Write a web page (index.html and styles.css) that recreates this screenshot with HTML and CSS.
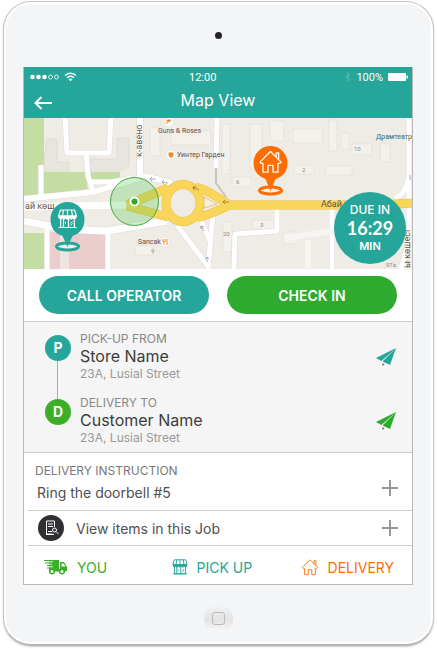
FILE: index.html
```
<!DOCTYPE html>
<html lang="en">
<head>
  <meta charset="UTF-8">
  <meta name="viewport" content="width=device-width, initial-scale=1.0">
  <title>Map View</title>
  <link rel="stylesheet" href="styles.css">
</head>
<body>
  <!-- shared icons -->
  <svg class="sprite" width="0" height="0" aria-hidden="true">
    <symbol id="store" viewBox="0 0 20 20">
      <path d="M3 1h14l2 6H1z M3.2 10v8.5h13.6V10 M6 10v8.500 M11 10v8.500 M1 18.500h18" fill="none" stroke="currentColor" stroke-width="1.200"/>
      <path d="M6 1 5 7M10 1v6M14 1l1 6" stroke="currentColor" stroke-width="1.200"/>
      <path d="M1 6.500h18v2a2 2 0 0 1-3.600 1 2 2 0 0 1-3.600 0 2 2 0 0 1-3.600 0 2 2 0 0 1-3.600 0A2 2 0 0 1 1 8.500z" fill="currentColor"/>
      <path d="M8 13v2M13 14.500l2-2M13 16.500l2-2" stroke="currentColor" stroke-width="1"/>
    </symbol>
    <symbol id="house" viewBox="0 0 20 20">
      <path d="M1.500 10.500 10 2l8.500 8.500-1 1H16V18.500h-4V13H8v5.500H4v-7H2.500z M14.500 6.200V3h2v5" fill="none" stroke="currentColor" stroke-linejoin="round"/>
    </symbol>
    <symbol id="plane" viewBox="0 0 20 18">
      <path d="M20 0 0 10l5.500 3zM20 0 6.500 13.500 14 17z" fill="currentColor"/>
      <path d="M6.500 15v3l2-1.500z" fill="#666"/>
    </symbol>
  </svg>

  <div class="device">
    <div class="camera"></div>

    <main class="screen">
      <header class="header">
        <div class="status">
          <div class="signal">
            <svg width="46" height="10" viewBox="0 0 46 10">
              <g fill="#fff"><circle cx="2.500" cy="5" r="2.300"/><circle cx="8.500" cy="5" r="2.300"/><circle cx="14.500" cy="5" r="2.300"/></g>
              <g fill="none" stroke="#fff" stroke-width=".8"><circle cx="20.500" cy="5" r="2"/><circle cx="26.500" cy="5" r="2"/></g>
              <path d="M35 3.500q5.500-4.500 11 0M37 5.800q3.500-3 7 0" fill="none" stroke="#fff" stroke-width="1.400"/>
              <path d="M38.500 7.300q2-1.500 4 0l-2 2z" fill="#fff"/>
            </svg>
          </div>
          <div class="clock">12:00</div>
          <div class="battery">
            <svg width="6" height="10" viewBox="0 0 6 10"><path d="M0 2.500l5 5L3 9.500v-9l2 2-5 5" fill="none" stroke="#62bfb5" stroke-width=".8"/></svg>
            <span>100%</span>
            <svg width="20" height="8" viewBox="0 0 20 8" fill="#fff"><rect width="18" height="8" rx="1"/><rect x="18.500" y="2.500" width="1.500" height="3" rx=".5"/></svg>
          </div>
        </div>
        <div class="title-bar">
          <button class="back" type="button" aria-label="Back">
            <svg width="18" height="14" viewBox="0 0 18 14"><path d="M18 7H1.500M7.500 1l-6 6 6 6" fill="none" stroke="#fff" stroke-width="2"/></svg>
          </button>
          <h1>Map View</h1>
        </div>
      </header>

      <section class="map">
        <svg class="map-canvas" viewBox="24 118 388 151">
          <rect x="24" y="118" width="388" height="151" fill="#efece6"/>

          <!-- parks -->
          <g fill="#c3dda2">
            <path d="M24 118h20v54h-4v22l-16 3z"/>
            <path d="M44 172h41l3 18-44 5zM90 172h30v9l-29-2z"/>
            <path d="M24 233h20v36H24z"/>
          </g>
          <path d="M49 232h56v37H49z" fill="#ebcdcd"/>
          <path d="M60 232h9v37h-9z" fill="#efe5e0"/>

          <!-- buildings -->
          <g fill="#e8e5df" stroke="#d8d5cf" stroke-width=".6">
            <path d="M47 139h10v23h12v9H44v-12z"/>
            <path d="M91 159h26v-21h12v28l-10 6H91z"/>
          </g>
          <g fill="#f3f1ec" stroke="#e2dfd8" stroke-width=".7">
            <path d="M150 128h10v28h-10zM171 131h40v14h-40zM222 124h8v50h-8zM250 124h12v44h-12zM270 121h14v20h-14zM293 129h29v14h-29zM329 120h8v31h-8zM341 133h8v17h-3l-5-2zM352 144h20v11h-20zM380 144h10v18h-10zM294 165h20v9h-20zM326 166h26v9h-26zM232 177h19v10h-19zM252 220h22v9h-22zM223 222h9v30h-9zM284 232h14v12h-14zM135 246l18-1v10h-18z"/>
          </g>

          <!-- streets, a wider grey casing under the white -->
          <g fill="none" stroke-linejoin="round">
            <g stroke="#dddad4">
              <path stroke-width="6" d="M65 116l2 37h42l2-37M86 153l2 23 5 15M90 182h22l20-4M41 165v30"/>
              <path stroke-width="7" d="M24 199l70-7 46-14M140 116v60q10 1 32 7"/>
              <path stroke-width="8" d="M24 221l40 8 43 2 60-10"/>
              <path stroke-width="6" d="M47 228v41M108 230v39M217 116l-1 52M213 214l-5 55M177 225l30 40M199 216l11 25M277 208v23l-42 3-1 35M332 205v64M409 116v58q-2 20-14 24M409 180v60l-8 29"/>
            </g>
            <path d="M216 168v15l10 14" stroke="#c9c5bd" stroke-width="2"/>
            <g stroke="#fff">
              <path stroke-width="5" d="M65 116l2 37h42l2-37M86 153l2 23 5 15M90 182h22l20-4M41 165v30"/>
              <path stroke-width="6" d="M24 199l70-7 46-14M140 116v60q10 1 32 7"/>
              <path stroke-width="7" d="M24 221l40 8 43 2 60-10M24 207l102-2"/>
              <path stroke-width="5" d="M47 228v41M108 230v39M217 116l-1 52M213 214l-5 55M177 225l30 40M199 216l11 25M277 208v23l-42 3-1 35M332 205v64M409 116v58q-2 20-14 24M409 180v60l-8 29"/>
            </g>
            <path d="M284 238l50-7M308 240v28" stroke="#f7f5f1" stroke-width="6"/>
          </g>

          <!-- avenue and roundabout -->
          <g fill="none" stroke-linejoin="round">
            <g stroke="#e8c04d">
              <path stroke-width="9" d="M127 205l41-17M127 206l41 11M196 187q8 2 16 7t18 11h150l32-2M197 218q12-3 33-13"/>
              <ellipse cx="183" cy="203" rx="17" ry="18.500" stroke-width="9"/>
            </g>
            <g stroke="#f9d55a">
              <path stroke-width="8" d="M127 205l41-17M127 206l41 11M196 187q8 2 16 7t18 11h150l32-2M197 218q12-3 33-13"/>
              <ellipse cx="183" cy="203" rx="17" ry="18.500" stroke-width="8"/>
            </g>
          </g>
          <path d="M204 197v11l13-4z" fill="#f5efe1" stroke="#e0bb57" stroke-width=".8"/>
          <g fill="none" stroke="#8d93be" stroke-width=".8">
            <path d="M150 179h6m-4-2-2 2 2 2M162 182l6 1m-4-3-2 2 2 2M204 231l-3-5m0 3v-3l3 1M207 262v-5m-2 2 2-2 2 2M410 180v-5"/>
          </g>
          <path d="M199 190l-6-3m1 3-1-3h3M229 202h-6m2-2-2 2 2 2" fill="none" stroke="#8a742f" stroke-width=".8"/>

          <g class="map-label">
            <text x="158" y="133">Guns &amp; Roses</text>
            <text x="177" y="157">Уинтер Гарден</text>
            <text x="138" y="244">Sancak</text>
            <text class="theatre" x="376" y="139">Драмтеатр</text>
          </g>
          <g class="map-street">
            <text x="321" y="207">Абай</text>
            <text x="25" y="209">ай көш</text>
            <text transform="translate(142 157) rotate(-90)">к-авено</text>
            <text transform="translate(410 268) rotate(-90)">ы көшесі</text>
          </g>
          <g class="map-number">
            <text x="236" y="184">6</text><text x="260" y="227">3</text><text x="223" y="236">20</text>
            <text x="354" y="151">10</text><text x="302" y="172">2</text><text x="151" y="253">9</text><text x="386" y="267">97а</text>
          </g>
          <g>
            <circle cx="169" cy="122" r="4" fill="#fff"/><path d="M167 120h4l-2 2zv4" fill="#f08a32" stroke="#f08a32"/>
            <circle cx="171" cy="155" r="4" fill="#fff"/><path d="M168.500 152.500h5v2.500l-1 2.500h-3l-1-2.500z" fill="#f08a32"/>
            <circle cx="165" cy="242" r="4" fill="#fff"/><path d="M163 239v3M165 239v3M164 241v4M167 239v6" stroke="#f08a32"/>
          </g>

          <!-- current position -->
          <circle cx="134.500" cy="201.500" r="24" fill="#4fc94f" fill-opacity=".28" stroke="#42a73c"/>
          <circle cx="134.500" cy="201.500" r="4" fill="#2eab2e" stroke="#fff" stroke-width="1.800"/>

          <!-- pins -->
          <g>
            <ellipse cx="67.500" cy="246.500" rx="11" ry="3.500" fill="#f4eeea" stroke="#26a69a" stroke-width="3"/>
            <path d="M67.500 247l-5-11q-12-4-12-17a17 17 0 0 1 34 0q0 13-12 17z" fill="#26a69a"/>
            <use href="#store" x="57" y="209" width="21" height="20" color="#fff"/>
          </g>
          <g>
            <ellipse cx="270.500" cy="190.500" rx="11" ry="3.500" fill="#f4eeea" stroke="#ff6d00" stroke-width="3"/>
            <path d="M270.500 191l-5-12q-12-4-12-16a17 17 0 0 1 34 0q0 12-12 16z" fill="#ff6d00"/>
            <use href="#house" x="258" y="149" width="25" height="25" color="#fff"/>
          </g>
        </svg>
        <div class="due">
          <span>DUE IN</span>
          <strong>16:29</strong>
          <span class="unit">MIN</span>
        </div>
      </section>

      <div class="actions">
        <button class="btn" type="button">CALL OPERATOR</button>
        <button class="btn btn-green" type="button">CHECK IN</button>
      </div>

      <section class="stops">
        <div class="stop">
          <span class="badge">P</span>
          <div class="stop-text">
            <h2>PICK-UP FROM</h2>
            <p class="name">Store Name</p>
            <p class="address">23A, Lusial Street</p>
          </div>
          <button class="navigate" type="button" aria-label="Navigate to store"><svg width="20" height="18"><use href="#plane"/></svg></button>
        </div>
        <div class="stop">
          <span class="badge badge-green">D</span>
          <div class="stop-text">
            <h2>DELIVERY TO</h2>
            <p class="name">Customer Name</p>
            <p class="address">23A, Lusial Street</p>
          </div>
          <button class="navigate navigate-green" type="button" aria-label="Navigate to customer"><svg width="20" height="18"><use href="#plane"/></svg></button>
        </div>
      </section>

      <section class="instruction">
        <div class="instruction-text">
          <h2>DELIVERY INSTRUCTION</h2>
          <p>Ring the doorbell #5</p>
        </div>
        <button class="plus" type="button" aria-label="Show instruction"></button>
      </section>

      <section class="items">
        <span class="items-icon">
          <svg width="26" height="26" viewBox="0 0 26 26" fill="none" stroke="#fff">
            <path d="M16.500 12V6h-8v13h6M10 9h5M10 11.500h5M10 16.500h4M8 19.500h8"/>
            <circle cx="16.500" cy="15" r="2"/><path d="M18 16.500l2.500 2.500"/>
          </svg>
        </span>
        <p>View items in this Job</p>
        <button class="plus" type="button" aria-label="Show items"></button>
      </section>

      <nav class="tabs">
        <a class="tab tab-you" href="#you">
          <svg width="24" height="16" viewBox="0 0 24 16">
            <path d="M5 1h10v11H5z M16 3h4l3 5v4h-7z M5 10h17v2.500H5z" fill="currentColor"/>
            <path d="M0 1.500h6M1 4h6M3 6.500h5M3 9h4" stroke="currentColor"/>
            <path d="M5 2.800h4M5 5.200h3M5 7.800h4" stroke="#fff" stroke-width=".8"/>
            <path d="M17.500 4.500h2l2 3h-4z" fill="#fff"/>
            <g fill="#fff" stroke="currentColor" stroke-width="1.500"><circle cx="8" cy="12.500" r="2.300"/><circle cx="18" cy="12.500" r="2.300"/></g>
          </svg>
          YOU
        </a>
        <a class="tab tab-pickup" href="#pickup">
          <svg width="16" height="16"><use href="#store"/></svg>
          PICK UP
        </a>
        <a class="tab tab-delivery" href="#delivery">
          <svg width="18" height="18"><use href="#house"/></svg>
          DELIVERY
        </a>
      </nav>
    </main>

    <button class="home" type="button" aria-label="Home"></button>
  </div>
</body>
</html>
```
FILE: styles.css
```
* {
  box-sizing: border-box;
}
body {
  margin: 0;
  padding: 1px 3px 4px;
  background-color: #fff;
  font-family: Inter, "Liberation Sans", sans-serif;
  color: #505050;
}
.sprite {
  position: absolute;
}
h1, h2, p {
  margin: 0;
  font-weight: 400;
}
svg {
  display: block;
  flex: none;
}
button {
  padding: 0;
  border: none;
  background: none;
  font-family: inherit;
  cursor: pointer;
}

/* tablet frame */
.device {
  display: flex;
  flex-direction: column;
  padding: 0 20px;
  border: 1px solid #c4c6c8;
  border-bottom: 2px solid #b4b6b8;
  border-radius: 28px;
  background-color: #f4f5f7;
  box-shadow: inset 0 0 0 2px #fff, 0 1px 2px #ccc;
}
.camera {
  align-self: center;
  width: 7px;
  height: 7px;
  margin: 30px 0 28px;
  border-radius: 50%;
  background-color: #252527;
}
.screen {
  border: 1px solid #bcb8b8;
  border-top: none;
  margin-left: -1px;
  background-color: #fff;
}
.home {
  align-self: center;
  display: flex;
  width: 29px;
  height: 29px;
  margin: 19px 0 11px;
  border-radius: 50%;
  background: linear-gradient(#f4f5f7, #e2e3e5 55%, #fafafa);
}
.home::before {
  content: "";
  width: 11px;
  height: 11px;
  margin: auto;
  border: 1px solid #bbb;
  border-radius: 3px;
}

/* header */
.header {
  background-color: #26a69a;
  color: #fff;
}
.status {
  display: flex;
  align-items: center;
  justify-content: space-between;
  height: 20px;
  padding: 0 4px 0 6px;
  font-family: Roboto, sans-serif;
  font-size: 11px;
}
.clock {
  padding-right: 16px;
}
.battery {
  display: flex;
  align-items: center;
  gap: 5px;
}
.title-bar {
  display: grid;
  grid-template-columns: 40px 1fr 40px;
  align-items: center;
  height: 31px;
  padding-bottom: 6px;
}
.back {
  justify-self: start;
  margin: 6px 0 0 10px;
}
.title-bar h1 {
  font-size: 16px;
  line-height: 24px;
  text-align: center;
}

/* map */
.map {
  position: relative;
}
.map-canvas {
  width: 100%;
}
.map-label {
  font: 7px Roboto, sans-serif;
  fill: #6e4a42;
}
.map-label .theatre {
  fill: #35686b;
}
.map-street {
  font: 9px Roboto, sans-serif;
  fill: #5f5146;
}
.map-number {
  font: 6px Roboto, sans-serif;
  fill: #888;
}
.due {
  position: absolute;
  right: 6px;
  bottom: 5px;
  display: flex;
  flex-direction: column;
  align-items: center;
  justify-content: center;
  width: 72px;
  height: 72px;
  border-radius: 50%;
  background-color: #26a69a;
  color: #fff;
  font-size: 12px;
  font-weight: 500;
  line-height: 16px;
}
.due strong {
  font-family: Lato, sans-serif;
  font-size: 18px;
  line-height: 20px;
}
.due .unit {
  font-size: 11px;
  font-weight: 600;
}

/* buttons */
.actions {
  display: flex;
  gap: 18px;
  padding: 7px 15px;
}
.btn {
  flex: 1;
  height: 38px;
  border-radius: 19px;
  background-color: #26a69a;
  color: #fff;
  font-size: 14px;
  font-weight: 600;
}
.btn-green {
  background-color: #2eab2e;
}

/* pick-up and delivery */
.stops {
  display: flex;
  flex-direction: column;
  gap: 14px;
  padding: 10px 16px 6px 21px;
  border-top: 1px solid #ccc;
  border-bottom: 1px solid #ccc;
  background-color: #f5f5f5;
}
.stop {
  display: flex;
  align-items: center;
}
.badge {
  position: relative;
  align-self: flex-start;
  width: 26px;
  margin: 3px 9px 0 0;
  border-radius: 50%;
  background-color: #26a69a;
  color: #fff;
  font-size: 14px;
  font-weight: 700;
  line-height: 26px;
  text-align: center;
}
.badge-green {
  background-color: #3cae2a;
}
/* line that joins the two badges */
.stop:first-child .badge::after {
  content: "";
  position: absolute;
  top: 26px;
  left: 12px;
  width: 1px;
  height: 38px;
  background-color: #aaa;
}
.stop-text {
  flex: 1;
}
.stop h2 {
  color: #888;
  font-size: 12px;
  line-height: 14px;
}
.name {
  color: #3c3c3c;
  font-size: 16px;
  line-height: 20px;
}
.address {
  color: #999;
  font-size: 12px;
  line-height: 16px;
}
.navigate {
  color: #26a69a;
}
.navigate-green {
  color: #2eab2e;
}

/* instruction and items */
.instruction {
  display: flex;
  align-items: flex-end;
  justify-content: space-between;
  padding: 10px 14px 7px 11px;
}
.instruction h2 {
  color: #777;
  font-size: 12px;
  line-height: 16px;
}
.instruction p {
  margin: 4px 0 0 2px;
  font-size: 14px;
  line-height: 20px;
}
.plus {
  width: 16px;
  height: 16px;
  background:
    linear-gradient(#999, #999) center / 16px 2px no-repeat,
    linear-gradient(#999, #999) center / 2px 16px no-repeat;
}
.instruction .plus {
  margin-bottom: 7px;
}
.items {
  display: flex;
  align-items: center;
  height: 36px;
  margin-left: 4px;
  padding: 0 14px 0 10px;
  border-top: 1px solid #d0d0d0;
  border-bottom: 1px solid #d0d0d0;
}
.items-icon {
  margin-right: 12px;
  border-radius: 50%;
  background-color: #2e3033;
}
.items p {
  flex: 1;
  font-size: 14px;
}

/* tabs */
.tabs {
  display: flex;
  justify-content: space-between;
  height: 38px;
  padding: 4px 18px 0 20px;
}
.tab {
  display: flex;
  align-items: center;
  gap: 9px;
  font-size: 14px;
  text-decoration: none;
}
.tab-you {
  color: #3cae2a;
}
.tab-pickup {
  padding-left: 16px;
  color: #26a69a;
}
.tab-delivery {
  color: #ff6d00;
}
```
